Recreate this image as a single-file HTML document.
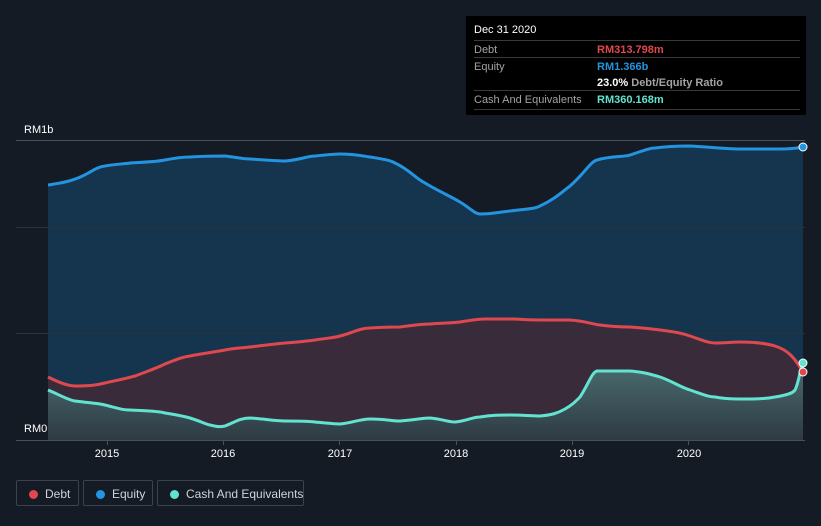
<!DOCTYPE html>
<html><head><style>
body{margin:0;width:821px;height:526px;background:#151b24;overflow:hidden;font-family:"Liberation Sans",sans-serif;}
.tt{position:absolute;left:466px;top:16px;width:340px;height:99px;background:#000;color:#fff;font-size:11px;}
.row{position:absolute;left:8px;right:6px;height:19px;border-top:1px solid #3a3a3a;line-height:18px;color:#a3a3a3;white-space:nowrap}
.row span{position:absolute;left:123px;font-weight:bold}
.lg{position:absolute;top:480px;height:26px;border:1px solid #3d434c;border-radius:2px;color:#d0d3d8;font-size:12px;line-height:26px;box-sizing:border-box;white-space:nowrap}
.lg i{position:absolute;left:12px;top:9px;width:9px;height:9px;border-radius:50%}
</style></head><body>
<svg width="821" height="526" style="position:absolute;left:0;top:0">
<defs>
<linearGradient id="cg" x1="0" y1="0" x2="0" y2="1"><stop offset="0" stop-color="#4a6d6f"/><stop offset="1" stop-color="#2e3a44"/></linearGradient>
</defs>
<path d="M48,185 C60,183 68,182 75,179 C88,175 95,167 105,166 C115,164 125,164 130,163 C150,162 160,161 165,160 C175,158 182,157 190,157 C205,156 215,156 225,156 C235,157 242,159 250,159 C265,160 275,161 285,161 C300,160 307,156 315,156 C325,155 333,154 340,154 C355,154 362,156 370,157 C382,159 390,160 395,163 C410,170 415,178 425,183 C440,192 450,196 460,202 C470,208 475,214 480,214 C492,214 500,212 510,211 C525,209 535,209 540,206 C555,199 562,192 570,186 C585,173 590,162 597,160 C610,156 625,157 630,155 C645,150 650,148 655,148 C670,146 680,146 690,146 C710,147 725,149 740,149 C760,149 770,149 780,149 C790,149 798,148 803,147 L803,440 L48,440Z" fill="#15344d"/>
<path d="M48,377 C60,383 68,386 75,386 C90,386 97,385 105,383 C118,380 128,378 135,376 C148,371 157,368 165,364 C175,360 182,357 190,356 C205,353 215,352 225,350 C235,348 242,348 250,347 C265,345 275,344 285,343 C300,342 307,341 315,340 C327,338 333,338 340,336 C352,333 360,328 370,328 C385,327 392,327 400,327 C415,325 422,324 430,324 C445,323 452,323 460,322 C472,320 478,319 485,319 C500,319 508,319 515,319 C528,320 535,320 540,320 C555,320 562,320 570,320 C585,321 592,324 600,325 C615,327 622,327 630,327 C645,328 652,329 660,330 C675,332 682,333 690,336 C702,340 708,343 715,343 C725,343 732,342 740,342 C755,342 765,343 775,346 C788,350 795,358 803,372 L803,440 L48,440Z" fill="#3a2b3b"/>
<path d="M48,390 C60,395 68,400 75,401 C90,403 97,403 105,405 C117,408 122,410 130,410 C148,411 158,411 165,413 C178,415 183,416 190,418 C200,421 205,424 210,425 C218,427 220,427 225,426 C235,422 240,418 250,418 C265,419 275,421 285,421 C300,421 307,421 315,422 C327,423 333,424 340,424 C352,423 360,419 370,419 C385,419 392,421 400,421 C415,420 422,418 430,418 C442,419 448,422 455,422 C467,421 472,417 480,417 C492,415 500,415 510,415 C525,415 532,416 540,416 C552,415 558,413 565,409 C572,405 575,402 580,397 C588,385 592,372 597,371 C610,371 620,371 630,371 C643,372 650,374 660,377 C672,381 680,387 690,390 C702,394 708,397 715,397 C725,399 732,399 740,399 C755,399 765,399 775,397 C788,395 793,393 795,390 C798,385 800,370 803,363 L803,440 L48,440Z" fill="url(#cg)"/>
<g stroke="#2b323c" stroke-width="1"><line x1="16" y1="140.5" x2="805" y2="140.5" stroke="#4a5058"/><line x1="16" y1="227.5" x2="805" y2="227.5"/><line x1="16" y1="333.5" x2="805" y2="333.5"/></g>
<line x1="16" y1="440.5" x2="805" y2="440.5" stroke="#4a5058"/>
<g stroke="#4a5058"><line x1="107.5" y1="440" x2="107.5" y2="445"/><line x1="223.5" y1="440" x2="223.5" y2="445"/><line x1="339.5" y1="440" x2="339.5" y2="445"/><line x1="456.5" y1="440" x2="456.5" y2="445"/><line x1="572.5" y1="440" x2="572.5" y2="445"/><line x1="688.5" y1="440" x2="688.5" y2="445"/></g>
<path d="M48,185 C60,183 68,182 75,179 C88,175 95,167 105,166 C115,164 125,164 130,163 C150,162 160,161 165,160 C175,158 182,157 190,157 C205,156 215,156 225,156 C235,157 242,159 250,159 C265,160 275,161 285,161 C300,160 307,156 315,156 C325,155 333,154 340,154 C355,154 362,156 370,157 C382,159 390,160 395,163 C410,170 415,178 425,183 C440,192 450,196 460,202 C470,208 475,214 480,214 C492,214 500,212 510,211 C525,209 535,209 540,206 C555,199 562,192 570,186 C585,173 590,162 597,160 C610,156 625,157 630,155 C645,150 650,148 655,148 C670,146 680,146 690,146 C710,147 725,149 740,149 C760,149 770,149 780,149 C790,149 798,148 803,147" fill="none" stroke="#2394e0" stroke-width="3"/>
<path d="M48,377 C60,383 68,386 75,386 C90,386 97,385 105,383 C118,380 128,378 135,376 C148,371 157,368 165,364 C175,360 182,357 190,356 C205,353 215,352 225,350 C235,348 242,348 250,347 C265,345 275,344 285,343 C300,342 307,341 315,340 C327,338 333,338 340,336 C352,333 360,328 370,328 C385,327 392,327 400,327 C415,325 422,324 430,324 C445,323 452,323 460,322 C472,320 478,319 485,319 C500,319 508,319 515,319 C528,320 535,320 540,320 C555,320 562,320 570,320 C585,321 592,324 600,325 C615,327 622,327 630,327 C645,328 652,329 660,330 C675,332 682,333 690,336 C702,340 708,343 715,343 C725,343 732,342 740,342 C755,342 765,343 775,346 C788,350 795,358 803,372" fill="none" stroke="#e0484f" stroke-width="3"/>
<path d="M48,390 C60,395 68,400 75,401 C90,403 97,403 105,405 C117,408 122,410 130,410 C148,411 158,411 165,413 C178,415 183,416 190,418 C200,421 205,424 210,425 C218,427 220,427 225,426 C235,422 240,418 250,418 C265,419 275,421 285,421 C300,421 307,421 315,422 C327,423 333,424 340,424 C352,423 360,419 370,419 C385,419 392,421 400,421 C415,420 422,418 430,418 C442,419 448,422 455,422 C467,421 472,417 480,417 C492,415 500,415 510,415 C525,415 532,416 540,416 C552,415 558,413 565,409 C572,405 575,402 580,397 C588,385 592,372 597,371 C610,371 620,371 630,371 C643,372 650,374 660,377 C672,381 680,387 690,390 C702,394 708,397 715,397 C725,399 732,399 740,399 C755,399 765,399 775,397 C788,395 793,393 795,390 C798,385 800,370 803,363" fill="none" stroke="#62e3d0" stroke-width="3"/>
<circle cx="803" cy="147" r="4" fill="#2394e0" stroke="#fff" stroke-width="1"/>
<circle cx="803" cy="372" r="4" fill="#e0484f" stroke="#fff" stroke-width="1"/>
<circle cx="803" cy="363" r="4" fill="#62e3d0" stroke="#fff" stroke-width="1"/>
<rect x="16" y="420" width="32" height="20" fill="#151b24"/>
<g fill="#fff" font-size="11"><text x="24" y="133">RM1b</text><text x="24" y="432">RM0</text>
<g text-anchor="middle"><text x="107" y="457">2015</text><text x="223" y="457">2016</text><text x="340" y="457">2017</text><text x="456" y="457">2018</text><text x="572" y="457">2019</text><text x="689" y="457">2020</text></g></g>
</svg>
<div class="tt">
<div style="position:absolute;left:8px;top:8px;font-size:11px">Dec 31 2020</div>
<div class="row" style="top:24px">Debt<span style="color:#e0484f">RM313.798m</span></div>
<div class="row" style="top:41px">Equity<span style="color:#2394e0">RM1.366b</span></div>
<div class="row" style="top:58px;border-top:none"><span style="color:#fff">23.0% <b style="color:#a3a3a3">Debt/Equity Ratio</b></span></div>
<div class="row" style="top:74px">Cash And Equivalents<span style="color:#62e3d0">RM360.168m</span></div>
<div style="position:absolute;left:8px;right:6px;top:93px;border-top:1px solid #3a3a3a"></div>
</div>
<div class="lg" style="left:16px;width:63px"><i style="background:#e0484f"></i><span style="position:absolute;left:28px">Debt</span></div>
<div class="lg" style="left:83px;width:70px"><i style="background:#2394e0"></i><span style="position:absolute;left:28px">Equity</span></div>
<div class="lg" style="left:157px;width:147px"><i style="background:#62e3d0"></i><span style="position:absolute;left:28px">Cash And Equivalents</span></div>
</body></html>
